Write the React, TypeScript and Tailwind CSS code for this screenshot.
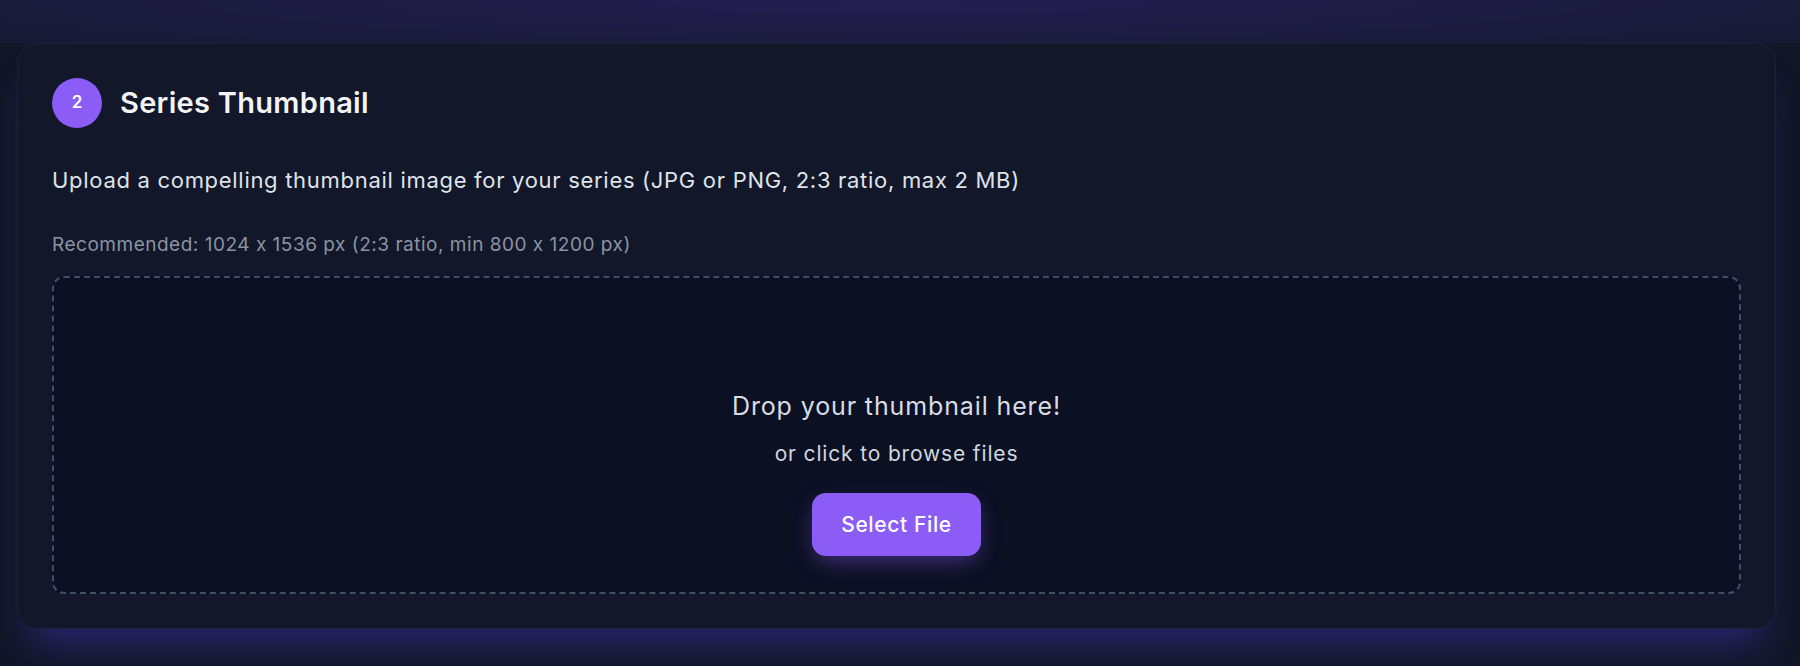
export default function App() {
  return (
    <div className="min-h-screen bg-[#111727] font-['Inter','Noto_Sans',sans-serif] text-white [font-variant-ligatures:no-contextual]">
      {/* glow left over from the section above */}
      <div className="h-[43px] bg-[radial-gradient(90%_220%_at_50%_0%,#241e52_0%,#1b1b3d_50%,#121727_100%)]" />

      <div className="pl-[17px] pr-[24px]">
        <section className="rounded-[20px] border border-[#1c2336] bg-[#121729] px-[34px] pt-[34px] pb-[34px] shadow-[0_30px_36px_-16px_rgba(70,50,190,0.5)]">
          <div className="flex items-center gap-[18px]">
            <div className="flex h-[50px] w-[50px] items-center justify-center rounded-full bg-[#8b5cf6] text-[17px] font-semibold text-white">
              2
            </div>
            <h2 className="text-[29px] font-semibold tracking-[0.01em] text-[#f3f4f6]">
              Series Thumbnail
            </h2>
          </div>

          <p className="mt-[38px] text-[22px] leading-[28px] tracking-[0.032em] text-[#dfe3ea]">
            Upload a compelling thumbnail image for your series (JPG or PNG, 2:3 ratio, max 2 MB)
          </p>

          <p className="mt-[39px] text-[19px] leading-[24px] tracking-[0.027em] text-[#8b93a3]">
            Recommended: 1024 x 1536 px (2:3 ratio, min 800 x 1200 px)
          </p>

          <div className="mt-[19px] flex h-[318px] flex-col items-center rounded-xl border-2 border-dashed border-[#434d61] bg-[#0c1023] pt-[114px]">
            <p className="text-[25px] leading-[28px] tracking-[0.035em] text-[#d8dce4]">Drop your thumbnail here!</p>
            <p className="mt-[20px] text-[21px] leading-[28px] tracking-[0.04em] text-[#d1d5de]">or click to browse files</p>
            <button className="mt-[25px] h-[63px] w-[169px] rounded-[14px] bg-[#8b5cf6] text-[21px] font-medium tracking-[0.03em] text-white shadow-[0_8px_22px_-4px_rgba(139,92,246,0.45)]">
              Select File
            </button>
          </div>
        </section>
      </div>
    </div>
  );
}
